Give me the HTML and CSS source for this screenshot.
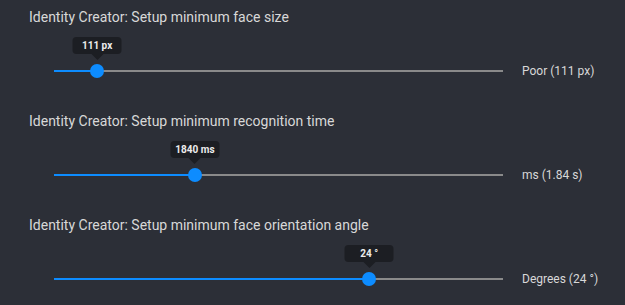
FILE: index.html
```html
<!DOCTYPE html>
<html>
<head>
<meta charset="utf-8">
<link rel="stylesheet" href="styles.css">
</head>
<body>
<div class="page">
  <section class="setting">
    <div class="title">Identity Creator: Setup minimum face size</div>
    <div class="row">
      <div class="slider" style="--p:9.6%">
        <div class="rail"></div>
        <div class="fill"></div>
        <div class="thumb"><div class="tip">111 px</div></div>
      </div>
      <div class="value">Poor (111 px)</div>
    </div>
  </section>
  <section class="setting">
    <div class="title">Identity Creator: Setup minimum recognition time</div>
    <div class="row">
      <div class="slider" style="--p:31.4%">
        <div class="rail"></div>
        <div class="fill"></div>
        <div class="thumb"><div class="tip">1840 ms</div></div>
      </div>
      <div class="value">ms (1.84 s)</div>
    </div>
  </section>
  <section class="setting">
    <div class="title">Identity Creator: Setup minimum face orientation angle</div>
    <div class="row">
      <div class="slider" style="--p:70.2%">
        <div class="rail"></div>
        <div class="fill"></div>
        <div class="thumb"><div class="tip">24 °</div></div>
      </div>
      <div class="value">Degrees (24 °)</div>
    </div>
  </section>
</div>
</body>
</html>
```
FILE: styles.css
```css
html, body {
  margin: 0;
  padding: 0;
  background: #2c2f37;
}
body {
  width: 625px;
  height: 305px;
  overflow: hidden;
  font-family: Roboto, "Liberation Sans", sans-serif;
  color: #dadada;
}
.page {
  display: flex;
  flex-direction: column;
}
.setting {
  height: 104px;
  box-sizing: border-box;
  padding: 7px 0 0 29px;
}
.title {
  font-size: 14px;
  line-height: 20px;
  color: #d8d8d8;
}
.row {
  margin-top: 30px;
  margin-left: 25px;
  height: 28px;
  display: grid;
  grid-template-columns: 449px auto;
  column-gap: 19px;
  align-items: center;
}
.slider {
  position: relative;
  height: 28px;
}
.rail {
  position: absolute;
  left: 0;
  right: 0;
  top: 13px;
  height: 2px;
  background: #8a8a8a;
}
.fill {
  position: absolute;
  left: 0;
  top: 13px;
  height: 2px;
  width: var(--p);
  background: #0d8cff;
}
.thumb {
  position: absolute;
  left: var(--p);
  top: 7px;
  width: 14px;
  height: 14px;
  margin-left: -7px;
  border-radius: 50%;
  background: #0d8cff;
}
.tip {
  position: absolute;
  left: 50%;
  bottom: 24px;
  transform: translateX(-50%);
  width: 49px;
  height: 17px;
  border-radius: 4px;
  background: #1c1e23;
  color: #ececec;
  font-size: 10px;
  font-weight: 700;
  line-height: 17px;
  text-align: center;
  white-space: nowrap;
}
.tip::after {
  content: "";
  position: absolute;
  left: 50%;
  bottom: -6px;
  margin-left: -6px;
  border-left: 6px solid transparent;
  border-right: 6px solid transparent;
  border-top: 6px solid #1c1e23;
}
.value {
  font-size: 12px;
  color: #d8d8d8;
  white-space: nowrap;
}
```
